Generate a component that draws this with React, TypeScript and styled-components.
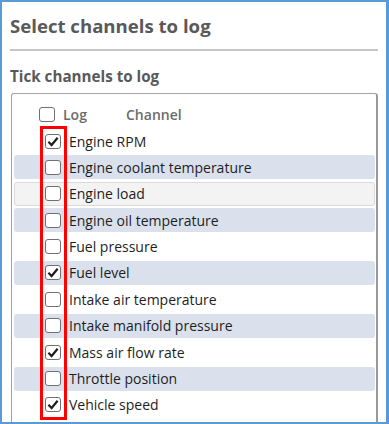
import styled, { createGlobalStyle } from "styled-components";

const GlobalStyle = createGlobalStyle`
  html, body {
    margin: 0;
    padding: 0;
    background: #ffffff;
  }
  * {
    box-sizing: border-box;
  }
`;

const channels = [
  { name: "Engine RPM", checked: true, tone: "plain" },
  { name: "Engine coolant temperature", checked: false, tone: "shaded" },
  { name: "Engine load", checked: false, tone: "hover" },
  { name: "Engine oil temperature", checked: false, tone: "shaded" },
  { name: "Fuel pressure", checked: false, tone: "plain" },
  { name: "Fuel level", checked: true, tone: "shaded" },
  { name: "Intake air temperature", checked: false, tone: "plain" },
  { name: "Intake manifold pressure", checked: false, tone: "shaded" },
  { name: "Mass air flow rate", checked: true, tone: "plain" },
  { name: "Throttle position", checked: false, tone: "shaded" },
  { name: "Vehicle speed", checked: true, tone: "plain" },
];

type Tone = "plain" | "shaded" | "hover";

const Frame = styled.div`
  width: 389px;
  height: 424px;
  border: 2px solid #5b9bd5;
  border-right-width: 3px;
  padding: 0 8px;
  display: flex;
  flex-direction: column;
  overflow: hidden;
  font-family: "Open Sans", "Noto Sans", sans-serif;
`;

const Title = styled.h2`
  margin: 12px 0 0;
  font-size: 18.6px;
  line-height: 23px;
  font-weight: 700;
  color: #595959;
`;

const Separator = styled.hr`
  margin: 12px 0 0;
  border: none;
  border-top: 2px solid #c6c6c6;
`;

const Subtitle = styled.h3`
  margin: 15px 0 0;
  font-size: 15.2px;
  line-height: 20px;
  font-weight: 700;
  color: #595959;
`;

const Panel = styled.div`
  margin: 7px 0 0 1px;
  flex: 1;
  border: 1px solid #a3a3a3;
  border-right: 2px solid #9a9a9a;
  border-bottom: none;
  border-radius: 3px 3px 0 0;
  padding: 0 1px 0 2px;
`;

const Header = styled.div`
  display: flex;
  align-items: center;
  height: 35px;
  padding: 6px 0 0 25px;
  font-size: 14px;
  font-weight: 600;
  color: #6c6c6c;
`;

const LogLabel = styled.span`
  margin-left: 8px;
  width: 63px;
`;

const List = styled.div`
  position: relative;
  display: flex;
  flex-direction: column;
  gap: 2.4px;
`;

const Highlight = styled.div`
  position: absolute;
  top: -3px;
  bottom: -3px;
  left: 26px;
  width: 27px;
  border: 3px solid #ff0000;
  pointer-events: none;
`;

const Row = styled.div<{ $tone: Tone }>`
  display: flex;
  align-items: center;
  height: 24px;
  padding-left: ${(p) => (p.$tone === "hover" ? 30 : 31)}px;
  border-radius: 3px;
  background: ${(p) =>
    p.$tone === "shaded" ? "#dae1ed" : p.$tone === "hover" ? "#f3f3f3" : "transparent"};
  border: ${(p) => (p.$tone === "hover" ? "1px solid #dadada" : "none")};
  font-size: 14px;
  color: #1e1e1e;
`;

const Box = styled.span`
  flex: none;
  width: 16px;
  height: 15px;
  border: 1px solid #707070;
  border-radius: 3px;
  background: #ffffff;
  display: flex;
  align-items: center;
  justify-content: center;
`;

const Label = styled.span`
  margin-left: 8px;
  white-space: nowrap;
`;

function CheckBox({ checked }: { checked: boolean }) {
  return (
    <Box>
      {checked && (
        <svg width="12" height="11" viewBox="0 0 12 11">
          <path
            d="M1.4 5.8 L4.6 9 L10.6 1.8"
            fill="none"
            stroke="#1f1f1f"
            strokeWidth="2.2"
          />
        </svg>
      )}
    </Box>
  );
}

export default function App() {
  return (
    <>
      <GlobalStyle />
      <Frame>
        <Title>Select channels to log</Title>
        <Separator />
        <Subtitle>Tick channels to log</Subtitle>
        <Panel>
          <Header>
            <CheckBox checked={false} />
            <LogLabel>Log</LogLabel>
            <span>Channel</span>
          </Header>
          <List>
            {channels.map((c) => (
              <Row key={c.name} $tone={c.tone as Tone}>
                <CheckBox checked={c.checked} />
                <Label>{c.name}</Label>
              </Row>
            ))}
            <Highlight />
          </List>
        </Panel>
      </Frame>
    </>
  );
}
